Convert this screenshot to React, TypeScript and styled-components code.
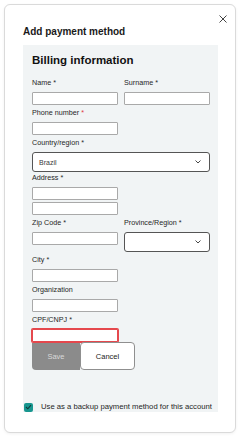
import styled, { createGlobalStyle } from "styled-components";

const GlobalStyle = createGlobalStyle`
  html, body {
    margin: 0;
    padding: 0;
    background: #ffffff;
    font-family: "Liberation Sans", Arial, sans-serif;
    color: #1f1f1f;
  }
  * { box-sizing: border-box; }
`;

const Card = styled.div`
  margin: 4px;
  width: 232px;
  border: 1px solid #dadada;
  border-radius: 6px;
  background: #fff;
  box-shadow: 0 1px 3px rgba(0, 0, 0, 0.06);
  padding: 9px 17px 20px 18px;
  display: flex;
  flex-direction: column;
`;

const CloseRow = styled.div`
  display: flex;
  justify-content: flex-end;
  height: 10px;
  margin-right: -10px;
`;

const CloseButton = styled.button`
  width: 10px;
  height: 10px;
  padding: 0;
  border: none;
  background: none;
  display: flex;
  align-items: center;
  justify-content: center;
`;

const Title = styled.h2`
  margin: 2px 0 7px;
  font-size: 10px;
  line-height: 12px;
  font-weight: 700;
  color: #1a1a1a;
`;

const Panel = styled.div`
  background: #f1f4f5;
  display: flex;
  flex-direction: column;
`;

const Form = styled.div`
  padding: 7px 8px 0 9px;
  display: flex;
  flex-direction: column;
`;

const Heading = styled.h3`
  margin: 0 0 10px;
  font-size: 11.5px;
  line-height: 16px;
  font-weight: 700;
  color: #111;
`;

const Row = styled.div`
  display: grid;
  grid-template-columns: 86px 86px;
  column-gap: 6px;
  align-items: start;
`;

const Field = styled.div<{ $gap?: number }>`
  display: flex;
  flex-direction: column;
  margin-top: ${(p) => p.$gap ?? 3}px;
`;

const Label = styled.label`
  font-size: 7.2px;
  line-height: 10px;
  height: 10px;
  margin-bottom: 4px;
  color: #262626;
  white-space: nowrap;
`;

const Req = styled.span<{ $red?: boolean }>`
  color: ${(p) => (p.$red ? "#e0323a" : "#262626")};
`;

const Input = styled.div<{ $error?: boolean; $wide?: boolean }>`
  width: ${(p) => (p.$wide ? 178 : 86)}px;
  height: 13px;
  background: #fff;
  border: 1px solid ${(p) => (p.$error ? "#e5484d" : "#a9a9a9")};
  border-radius: 1px;
  box-shadow: ${(p) => (p.$error ? "0 0 0 1px #e5484d" : "none")};
  & + & {
    margin-top: 2px;
  }
`;

const Select = styled.div<{ $wide?: boolean }>`
  width: ${(p) => (p.$wide ? 178 : 86)}px;
  height: 20px;
  background: #fff;
  border: 1px solid #555;
  border-radius: 3px;
  display: flex;
  align-items: center;
  justify-content: space-between;
  padding: 0 8px 0 6px;
  font-size: 7px;
  color: #3a3a3a;
`;

const Buttons = styled.div`
  display: flex;
  align-items: flex-end;
  margin-top: 0px;
`;

const SaveButton = styled.button`
  width: 48px;
  height: 27px;
  border: none;
  border-radius: 0 0 0 4px;
  background: #8b8b8b;
  color: #d9d9d9;
  font-family: inherit;
  font-size: 7.5px;
  padding: 0;
`;

const CancelButton = styled.button`
  width: 55px;
  height: 28px;
  border: 1px solid #8f8f8f;
  border-radius: 4px;
  background: #fff;
  color: #222;
  font-family: inherit;
  font-size: 7.5px;
  padding: 0;
`;

const Consent = styled.div`
  display: flex;
  align-items: center;
  gap: 8px;
  margin-top: 32px;
  padding-left: 1px;
  height: 10px;
`;

const CheckBox = styled.span`
  width: 9px;
  height: 9px;
  border-radius: 2px;
  background: #18968f;
  display: flex;
  align-items: center;
  justify-content: center;
`;

const ConsentText = styled.span`
  font-size: 7.7px;
  line-height: 10px;
  color: #1f1f1f;
  white-space: nowrap;
`;

const Chevron = () => (
  <svg width="6" height="4" viewBox="0 0 6 4">
    <polyline points="0.5,0.5 3,3 5.5,0.5" fill="none" stroke="#333" strokeWidth="0.9" />
  </svg>
);

export default function App() {
  return (
    <>
      <GlobalStyle />
      <Card>
        <CloseRow>
          <CloseButton aria-label="Close">
            <svg width="8" height="8" viewBox="0 0 8 8">
              <path d="M0.5 0.5 L7.5 7.5 M7.5 0.5 L0.5 7.5" stroke="#444" strokeWidth="1" />
            </svg>
          </CloseButton>
        </CloseRow>
        <Title>Add payment method</Title>
        <Panel>
          <Form>
            <Heading>Billing information</Heading>
            <Row>
              <Field $gap={0}>
                <Label>Name <Req>*</Req></Label>
                <Input />
              </Field>
              <Field $gap={0}>
                <Label>Surname <Req>*</Req></Label>
                <Input />
              </Field>
            </Row>
            <Field>
              <Label>Phone number <Req $red>*</Req></Label>
              <Input />
            </Field>
            <Field>
              <Label>Country/region <Req>*</Req></Label>
              <Select $wide>
                <span>Brazil</span>
                <Chevron />
              </Select>
            </Field>
            <Field $gap={1}>
              <Label>Address <Req>*</Req></Label>
              <Input />
              <Input />
            </Field>
            <Row>
              <Field>
                <Label>Zip Code <Req>*</Req></Label>
                <Input />
              </Field>
              <Field>
                <Label>Province/Region <Req>*</Req></Label>
                <Select>
                  <span />
                  <Chevron />
                </Select>
              </Field>
            </Row>
            <Field>
              <Label>City <Req>*</Req></Label>
              <Input />
            </Field>
            <Field>
              <Label>Organization</Label>
              <Input />
            </Field>
            <Field>
              <Label>CPF/CNPJ <Req>*</Req></Label>
              <Input $error />
            </Field>
            <Buttons>
              <SaveButton>Save</SaveButton>
              <CancelButton>Cancel</CancelButton>
            </Buttons>
          </Form>
          <Consent>
            <CheckBox>
              <svg width="7" height="6" viewBox="0 0 7 6">
                <polyline points="1,3 2.8,4.8 6,1.2" fill="none" stroke="#0f3a3a" strokeWidth="1.1" />
              </svg>
            </CheckBox>
            <ConsentText>Use as a backup payment method for this account</ConsentText>
          </Consent>
        </Panel>
      </Card>
    </>
  );
}
